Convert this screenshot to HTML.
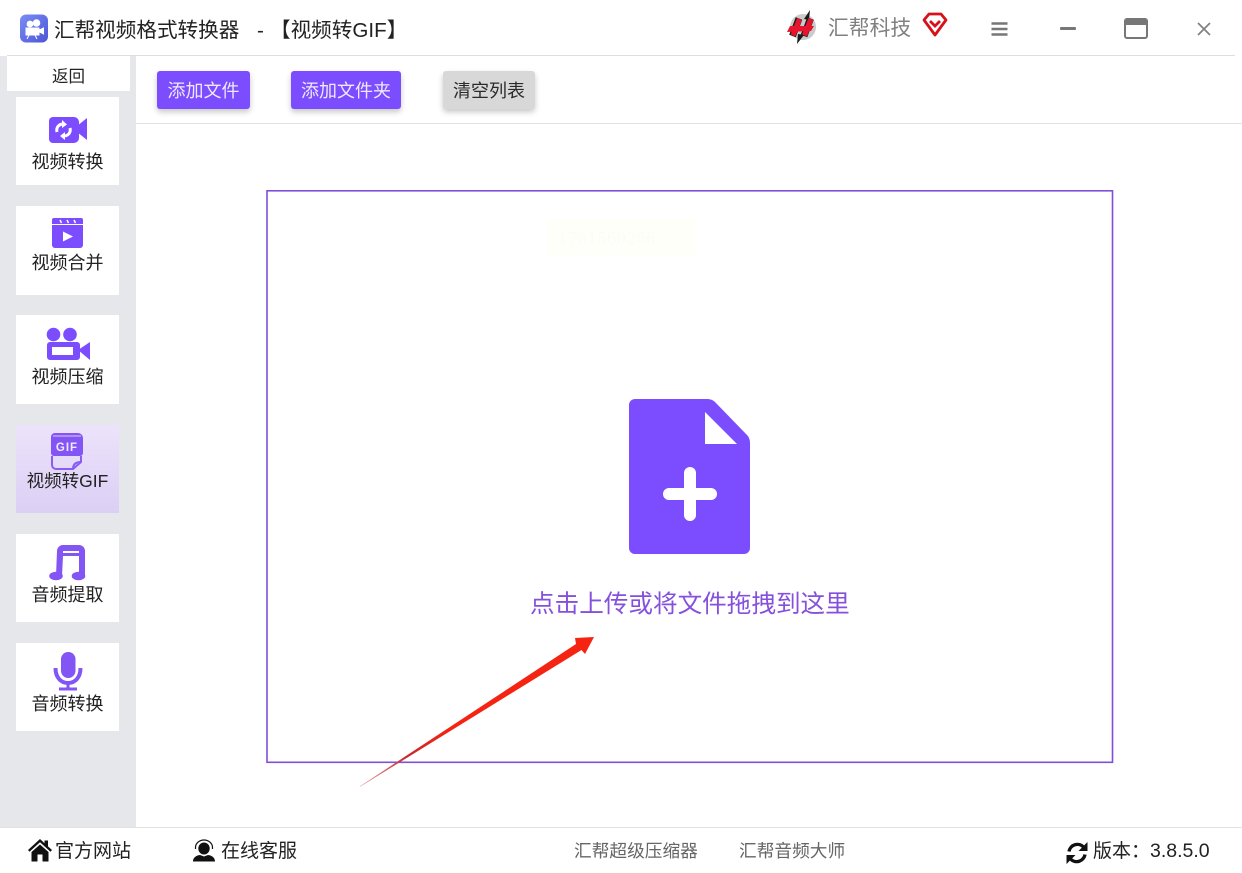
<!DOCTYPE html>
<html lang="zh-CN"><head><meta charset="utf-8"><title>汇帮视频格式转换器</title>
<style>
html,body{margin:0;padding:0}
body{width:1242px;height:873px;position:relative;overflow:hidden;background:#fff;font-family:"Liberation Sans","Noto Sans CJK SC",sans-serif;color:#1c1c1c}
.a{position:absolute}
.t{position:absolute;white-space:nowrap;line-height:1}
.card{position:absolute;left:16px;width:103px;background:#fff}
.lab{position:absolute;left:0;width:103px;text-align:center;font-size:18px;line-height:1;white-space:nowrap;color:#222}
.btn{position:absolute;top:71px;height:38px;border-radius:3px;background:#7c4dff;color:#efe8ff;font-size:18px;line-height:41px;text-align:center;box-shadow:0 3px 6px rgba(0,0,0,.22)}
svg{position:absolute;display:block}
</style></head><body>

<!-- title bar -->
<svg style="left:20px;top:14px" width="28" height="29" viewBox="0 0 28 29">
<defs><linearGradient id="g1" x1="0" y1="0" x2="1" y2="1"><stop offset="0" stop-color="#7a8cf5"/><stop offset="1" stop-color="#4d55d8"/></linearGradient></defs>
<rect width="28" height="28" y=".5" rx="6" fill="url(#g1)"/>
<circle cx="10" cy="10" r="3.400" fill="#fff"/><circle cx="16.500" cy="9" r="3.800" fill="#fff"/>
<path d="M6 14h13v7H6zM19.500 16l4-2v6l-4-2zM9 21l-2 4M15 21l2 4" fill="#fff" stroke="#fff"/>
</svg>
<div class="t" style="left:54px;top:21px;font-size:20.6px;color:#222">汇帮视频格式转换器</div>
<div class="t" style="left:257px;top:21px;font-size:20.6px;color:#222">-</div>
<div class="t" style="left:270px;top:21px;font-size:20.6px;color:#222">【视频转GIF】</div>

<svg style="left:785px;top:9px" width="32" height="36" viewBox="0 0 32 36">
<circle cx="18" cy="18" r="13" fill="#c8cccc"/>
<path d="M25 1l-6 9 5 1zM12 35l7-9-6-1z" fill="#1a1a1a"/>
<path d="M14 9.500L7.500 27M25.500 9.500L19 27" fill="none" stroke="#1a1a1a" stroke-width="7"/>
<path d="M14.500 10L8 26.500M26 10L19.500 26.500" fill="none" stroke="#e8142d" stroke-width="5.200"/>
<path d="M2 23l3-6h24l-3 5z" fill="#e8142d"/>
</svg>
<div class="t" style="left:828px;top:19px;font-size:20.8px;color:#808080">汇帮科技</div>
<svg style="left:922px;top:12px" width="26" height="25" viewBox="0 0 26 25">
<path d="M7 2h12l5 6-11 15L2 8z" fill="none" stroke="#d8101c" stroke-width="2.800" stroke-linejoin="round"/>
<path d="M8 9l5 5 5-5" fill="none" stroke="#d8101c" stroke-width="2.800"/>
</svg>
<svg style="left:990px;top:21px" width="20" height="16" viewBox="0 0 20 16"><path d="M1.500 2.500h16M1.500 8h16M1.500 13.500h16" stroke="#777" stroke-width="2.600"/></svg>
<div class="a" style="left:1060px;top:27px;width:16px;height:3px;border-radius:1px;background:#777"></div>
<svg style="left:1124px;top:18px" width="24" height="21" viewBox="0 0 24 21"><rect x="1" y="1" width="22" height="19" rx="2" fill="none" stroke="#777" stroke-width="2"/><rect x="1" y="1" width="22" height="6" fill="#777"/></svg>
<svg style="left:1196px;top:21px" width="16" height="16" viewBox="0 0 16 16"><path d="M2 2l12 12M14 2L2 14" stroke="#808080" stroke-width="1.700"/></svg>
<div class="a" style="left:7px;top:55px;width:1228px;height:1px;background:#dedede"></div>

<!-- sidebar -->
<div class="a" style="left:0;top:56px;width:136px;height:771px;background:#e6e7eb"></div>
<div class="a" style="left:7px;top:56px;width:123px;height:35px;background:#fff"></div>
<div class="t" style="left:7px;width:123px;top:69px;text-align:center;font-size:16.500px;color:#222">返回</div>

<div class="card" style="top:97px;height:88px">
<svg style="left:32px;top:18px" width="40" height="28" viewBox="0 0 40 28">
<path d="M5 2h21a5 5 0 0 1 5 5v16a5 5 0 0 1-5 5H5a4 4 0 0 1-4-4V6a4 4 0 0 1 4-4z" fill="#7c4dff"/>
<path d="M29 11l10-8v22l-10-8z" fill="#7c4dff"/>
<path d="M9 17c-1-4 1-7 5-8M22 13c1 4-1 7-5 8" fill="none" stroke="#fff" stroke-width="3"/>
<path d="M14 5l5 4.500-5 3.500zM17 17l-5 4 5 4z" fill="#fff"/>
</svg>
<div class="lab" style="top:56px">视频转换</div></div>

<div class="card" style="top:206px;height:89px">
<svg style="left:36px;top:11px" width="31" height="31" viewBox="0 0 31 31">
<path d="M2 1h27a2 2 0 0 1 2 2v4H0V3a2 2 0 0 1 2-2z" fill="#7c4dff"/>
<path d="M0 8h31v20a3 3 0 0 1-3 3H3a3 3 0 0 1-3-3z" fill="#7c4dff"/>
<path d="M8 3l1.500 3M15 3l1.500 3M22 3l1.500 3" stroke="#fff" stroke-width="1.500"/>
<path d="M11 14.500l10 5-10 5z" fill="#fff"/>
</svg>
<div class="lab" style="top:48px">视频合并</div></div>

<div class="card" style="top:315px;height:89px">
<svg style="left:30px;top:12px" width="45" height="34" viewBox="0 0 45 34">
<circle cx="7.500" cy="7.500" r="6.800" fill="#7c4dff"/><circle cx="24" cy="7.500" r="6.800" fill="#7c4dff"/>
<path fill-rule="evenodd" d="M4 15h27a3 3 0 0 1 3 3v12a3 3 0 0 1-3 3H4a3 3 0 0 1-3-3V18a3 3 0 0 1 3-3zM6 20v8h21v-8z" fill="#7c4dff"/>
<path d="M32 23l12-8v18z" fill="#7c4dff"/>
</svg>
<div class="lab" style="top:53px">视频压缩</div></div>

<div class="card" style="top:425px;height:88px;background:linear-gradient(#ece3fb,#dccff5)">
<svg style="left:34px;top:8px" width="36" height="38" viewBox="0 0 36 38">
<path d="M2 23V32a4 4 0 0 0 4 4h17l8-7v-6" fill="none" stroke="#8a5cf5" stroke-width="2"/>
<path d="M23 36c0-5 3-7 8-7" fill="none" stroke="#8a5cf5" stroke-width="2"/>
<path d="M5 0h23a5 5 0 0 1 5 5v15a3 3 0 0 1-3 3H4a3 3 0 0 1-3-3V4a4 4 0 0 1 4-4z" fill="#8355f5"/>
<path d="M3 3h28" stroke="#dccff5" stroke-width="1"/>
<text x="17" y="18" text-anchor="middle" font-family="Liberation Sans" font-weight="700" font-size="11.500" letter-spacing="1" fill="#f0e9fd">GIF</text>
</svg>
<div class="lab" style="top:48px;font-size:17.500px">视频转GIF</div></div>

<div class="card" style="top:534px;height:88px">
<svg style="left:33px;top:11px" width="37" height="36" viewBox="0 0 37 36">
<path fill-rule="evenodd" d="M13 0h17a6 6 0 0 1 6 6v25h-6V11H14l-1 20H7l1-25a6 6 0 0 1 5-6zM14 6v2h16V6z" fill="#8355f5"/>
<ellipse cx="7" cy="31" rx="6.800" ry="4.300" fill="#8355f5"/><ellipse cx="29.500" cy="31" rx="6.800" ry="4.300" fill="#8355f5"/>
</svg>
<div class="lab" style="top:52px">音频提取</div></div>

<div class="card" style="top:643px;height:88px">
<svg style="left:37px;top:9px" width="30" height="40" viewBox="0 0 30 40">
<rect x="8" y="0" width="14.500" height="26" rx="7.200" fill="#8355f5"/>
<path d="M2.500 16c0 9 5 15 12.500 15s12.500-6 12.500-15" fill="none" stroke="#8355f5" stroke-width="4"/>
<path d="M13.500 30h3v6h-3z" fill="#8355f5"/><rect x="6" y="35.500" width="18" height="3" fill="#8355f5"/>
</svg>
<div class="lab" style="top:52px">音频转换</div></div>

<!-- toolbar -->
<div class="btn" style="left:157px;width:93px">添加文件</div>
<div class="btn" style="left:291px;width:110px">添加文件夹</div>
<div class="btn" style="left:443px;width:92px;background:#d8d8d8;color:#2a2a2a">清空列表</div>
<div class="a" style="left:136px;top:123px;width:1106px;height:1px;background:#e2e2e2"></div>

<!-- drop zone -->
<svg style="left:260px;top:185px" width="860" height="585" viewBox="0 0 860 585"><rect x="7" y="5.800" width="845.500" height="571.500" fill="none" stroke="#7e4fd8" stroke-width="1.600"/></svg>
<div class="a" style="left:547px;top:219px;width:148px;height:36px;background:#fffffa"></div>
<div class="t" style="left:558px;top:229px;font-family:'Liberation Serif',serif;font-size:18px;color:#fcfcf7;letter-spacing:.8px">1761560266</div>

<svg style="left:628px;top:398px" width="123" height="157" viewBox="0 0 123 157">
<path d="M7 1h72c3 0 6 1 8 3l32 33c2 2 3 5 3 8v105a6 6 0 0 1-6 6H7a6 6 0 0 1-6-6V7a6 6 0 0 1 6-6z" fill="#7c4dff"/>
<path d="M77 14v32h32z" fill="#fff"/>
<path d="M62 75v42M41 96h42" stroke="#fff" stroke-width="12" stroke-linecap="round" fill="none"/>
</svg>
<div class="t" style="left:530px;top:593px;font-size:24.600px;color:#8550dc">点击上传或将文件拖拽到这里</div>

<svg style="left:350px;top:625px" width="260" height="170" viewBox="0 0 260 170">
<defs><linearGradient id="ar" x1="10" y1="161" x2="100" y2="100" gradientUnits="userSpaceOnUse"><stop offset="0" stop-color="#d89090" stop-opacity=".8"/><stop offset=".5" stop-color="#c8282a"/><stop offset="1" stop-color="#f52412"/></linearGradient></defs>
<path d="M9.500 161.500L226 19l-1-6L244 12l-9 17-3.500-4L10.500 161.500z" fill="url(#ar)"/>
</svg>

<!-- footer -->
<div class="a" style="left:0;top:827px;width:1242px;height:1px;background:#e2e2e2"></div>
<svg style="left:28px;top:838px" width="24" height="24" viewBox="0 0 24 24">
<path d="M12 1L0 12l1.500 1.800L12 4.300l10.500 9.500L24 12l-4-3.600V2.500h-3.500v2.700z" fill="#111"/>
<path d="M12 6.500L3.500 14v9.500h6v-7h5v7h6V14z" fill="#111"/>
</svg>
<div class="t" style="left:55px;top:842px;font-size:19px;color:#222">官方网站</div>
<svg style="left:193px;top:839px" width="22" height="23" viewBox="0 0 22 23">
<ellipse cx="11" cy="9.500" rx="5.700" ry="6" fill="#111"/>
<path d="M2.500 10V8.500a8.500 7.500 0 0 1 17 0V10" fill="none" stroke="#111" stroke-width="1.200"/>
<path d="M0 22.500c0-4 3-6 7-6.500l4 1.500 4-1.500c4 .5 7 2.500 7 6.500z" fill="#111"/>
</svg>
<div class="t" style="left:221px;top:842px;font-size:19px;color:#222">在线客服</div>
<div class="t" style="left:574px;top:843px;font-size:17.700px;color:#666">汇帮超级压缩器</div>
<div class="t" style="left:739px;top:843px;font-size:17.700px;color:#666">汇帮音频大师</div>
<svg style="left:1066px;top:842px" width="22" height="22" viewBox="0 0 22 22">
<path d="M3 9.500A8.500 8.500 0 0 1 17.500 5" fill="none" stroke="#111" stroke-width="3.400"/>
<path d="M21.500 0v9h-9z" fill="#111"/>
<path d="M19 12.500A8.500 8.500 0 0 1 4.500 17" fill="none" stroke="#111" stroke-width="3.400"/>
<path d="M.5 22v-9h9z" fill="#111"/>
</svg>
<div class="t" style="left:1093px;top:842px;font-size:19px;color:#222">版本：</div>
<div class="t" style="left:1150px;top:842px;font-size:19.500px;color:#222">3.8.5.0</div>

</body></html>
